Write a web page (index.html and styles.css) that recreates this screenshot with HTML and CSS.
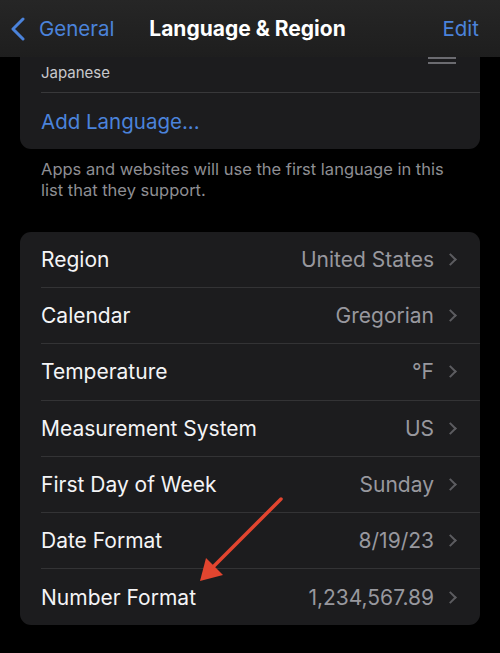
FILE: index.html
```html
<!DOCTYPE html>
<html lang="en">
<head>
    <meta charset="UTF-8">
    <meta name="viewport" content="width=device-width, initial-scale=1.0">
    <title>Language &amp; Region</title>
    <link rel="stylesheet" href="styles.css">
</head>
<body>
    <div class="nav">
        <a class="back" href="#">
            <svg class="back-chevron" width="16" height="24" viewBox="0 0 16 24">
                <path d="M13 2 L3 12 L13 22" fill="none" stroke="#4b83db" stroke-width="3" stroke-linecap="round" stroke-linejoin="round"/>
            </svg>
            <span>General</span>
        </a>
        <span class="title">Language &amp; Region</span>
        <a class="edit" href="#">Edit</a>
    </div>

    <div class="content">
        <div class="card card-top">
            <div class="lang-row">
                <span class="lang-sub">Japanese</span>
                <span class="handle"></span>
            </div>
            <div class="add-row">Add Language...</div>
        </div>
        <p class="footnote">Apps and websites will use the first language in this list that they support.</p>

        <div class="card">
            <div class="row"><span class="label">Region</span><span class="value">United States</span><span class="chev"></span></div>
            <div class="row"><span class="label">Calendar</span><span class="value">Gregorian</span><span class="chev"></span></div>
            <div class="row"><span class="label">Temperature</span><span class="value">°F</span><span class="chev"></span></div>
            <div class="row"><span class="label">Measurement System</span><span class="value">US</span><span class="chev"></span></div>
            <div class="row"><span class="label">First Day of Week</span><span class="value">Sunday</span><span class="chev"></span></div>
            <div class="row"><span class="label">Date Format</span><span class="value">8/19/23</span><span class="chev"></span></div>
            <div class="row"><span class="label">Number Format</span><span class="value">1,234,567.89</span><span class="chev"></span></div>
        </div>
    </div>

    <!-- annotation arrow drawn over the list -->
    <svg class="arrow" width="500" height="653" viewBox="0 0 500 653">
        <line x1="281" y1="499" x2="212" y2="568" stroke="#e2452f" stroke-width="3.5" stroke-linecap="round"/>
        <polygon points="200,581 206,558 223,575" fill="#e2452f"/>
    </svg>
</body>
</html>
```

FILE: styles.css
```css
* {
    box-sizing: border-box;
}

body {
    margin: 0;
    padding: 0;
    width: 500px;
    height: 653px;
    overflow: hidden;
    background: #000;
    font-family: Inter, "Liberation Sans", sans-serif;
    color: #f2f2f4;
    position: relative;
}

a {
    text-decoration: none;
    color: #4b83db;
}

.nav {
    height: 57px;
    background: linear-gradient(#262626, #1e1e1e);
    display: flex;
    align-items: center;
    justify-content: space-between;
    padding: 0 21px 0 10px;
}

.back {
    display: flex;
    align-items: center;
    gap: 13px;
    font-size: 20.5px;
    width: 112px;
}

.title {
    font-size: 21px;
    font-weight: 700;
    color: #fff;
    margin-left: 6px;
}

.edit {
    font-size: 20.5px;
    width: 112px;
    text-align: right;
}

.content {
    padding: 0 20px;
}

.card {
    background: #1c1c1e;
    border-radius: 11px;
    overflow: hidden;
}

.card-top {
    border-radius: 0 0 11px 11px;
}

.lang-row {
    height: 36px;
    margin-left: 21px;
    border-bottom: 1px solid #38383a;
    display: flex;
    align-items: center;
    justify-content: space-between;
    padding-right: 24px;
}

.lang-sub {
    font-size: 15px;
    color: #c8c8cc;
    padding-bottom: 5px;
}

.handle {
    align-self: flex-start;
    width: 28px;
    height: 7px;
    border-top: 2px solid #6b6b70;
    border-bottom: 2px solid #6b6b70;
}

.add-row {
    height: 56px;
    padding-left: 21px;
    display: flex;
    align-items: center;
    font-size: 20.5px;
    color: #4b83db;
}

.footnote {
    margin: 10px 0 0;
    padding: 0 21px;
    font-size: 16.5px;
    line-height: 21px;
    color: #8e8e93;
    height: 73px;
}

.row {
    height: 56.2px;
    margin-left: 21px;
    padding-right: 22px;
    display: flex;
    align-items: center;
    border-bottom: 1px solid #333335;
    font-size: 21px;
}

.row:last-child {
    border-bottom: none;
}

.label {
    flex: 1;
    color: #f4f4f6;
}

.value {
    color: #98989e;
}

.chev {
    width: 9px;
    height: 9px;
    margin-left: 12px;
    margin-right: 3px;
    border-top: 2.5px solid #5c5c60;
    border-right: 2.5px solid #5c5c60;
    transform: rotate(45deg);
}

.arrow {
    position: absolute;
    left: 0;
    top: 0;
    pointer-events: none;
}
```
